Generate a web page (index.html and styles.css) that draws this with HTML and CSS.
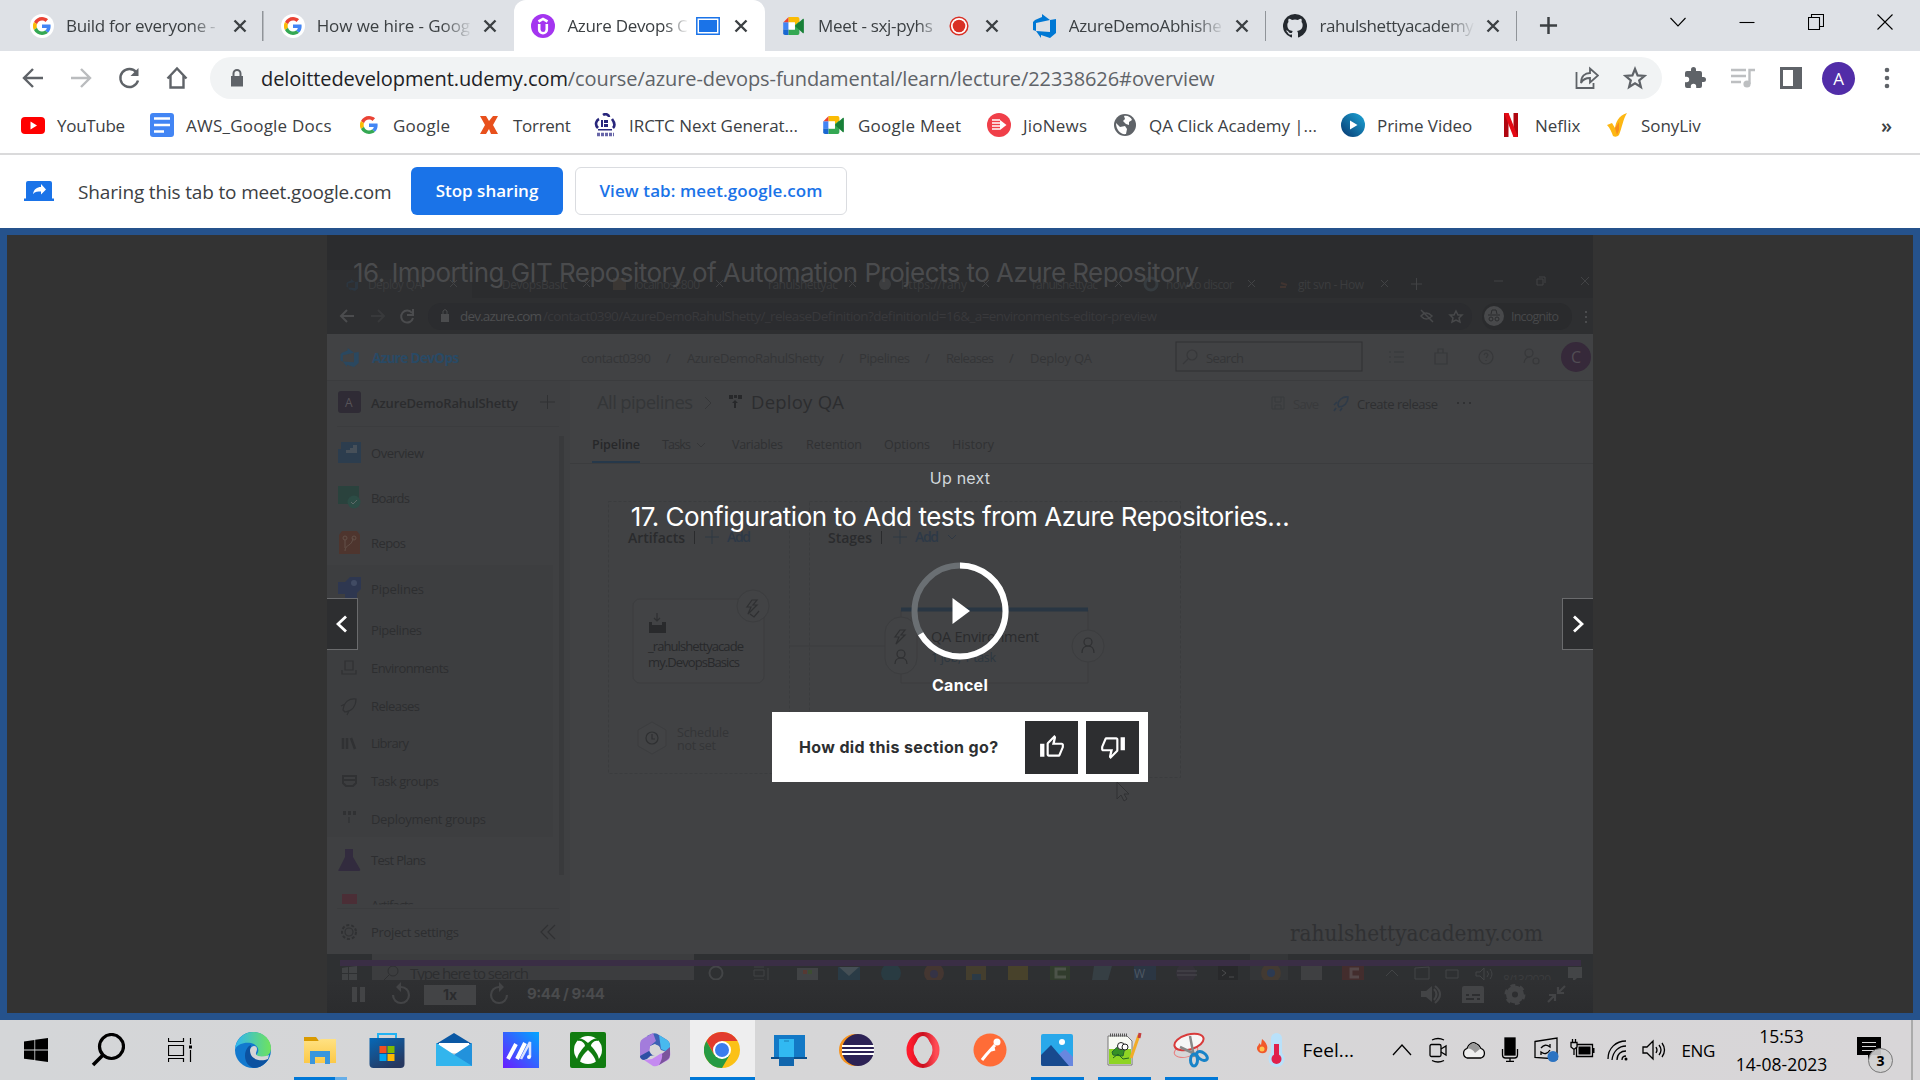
FILE: index.html
```html
<!DOCTYPE html>
<html lang="en">
<head>
<meta charset="utf-8">
<title>Azure Devops Course</title>
<link rel="stylesheet" href="styles.css">
</head>
<body>
<svg class="defs" width="0" height="0" aria-hidden="true">
  <defs>
    <symbol id="google" viewBox="0 0 48 48">
      <path fill="#ea4335" d="M24 9.500c3.500 0 6.700 1.200 9.200 3.600l6.900-6.900C35.900 2.400 30.500 0 24 0 14.600 0 6.500 5.400 2.600 13.200l8 6.200C12.400 13.700 17.700 9.500 24 9.500z"/>
      <path fill="#4285f4" d="M47 24.500c0-1.600-.2-3.100-.4-4.500H24v9h12.900c-.6 3-2.200 5.500-4.800 7.200l7.700 6C44.400 38 47 31.800 47 24.500z"/>
      <path fill="#fbbc05" d="M10.500 28.600a14.500 14.500 0 0 1 0-9.200l-8-6.200a24 24 0 0 0 0 21.600z"/>
      <path fill="#34a853" d="M24 48c6.500 0 11.900-2.100 15.900-5.800l-7.800-6c-2.100 1.500-4.900 2.300-8.100 2.300-6.300 0-11.600-4.200-13.500-9.900l-8 6.200C6.500 42.600 14.600 48 24 48z"/>
    </symbol>
    <symbol id="meet" viewBox="0 0 24 20">
      <path fill="#ea4335" d="M0 6 6 0v6z"/><path fill="#4285f4" d="M0 6h6v8H0z"/><path fill="#1967d2" d="M0 14h6v6H2q-2 0-2-2z"/>
      <path fill="#fbbc04" d="M6 0h10q2 0 2 2v5l-5 4V6H6z"/><path fill="#34a853" d="M6 14h7V9l5-4v13q0 2-2 2H6z"/><path fill="#188038" d="m13 10 9-8q1-.6 1 1v14q0 1.600-1 1z"/><path fill="#fff" d="M6 6h7v8H6z"/>
    </symbol>
    <symbol id="devops" viewBox="0 0 24 24"><path d="M23 5v14l-6 5-9-3v3l-5-7 14 1V6zM17 6 9 0v3L2 6 0 8v8l3 1V9z"/></symbol>
    <symbol id="close" viewBox="0 0 14 14"><path d="m1.500 1.500 11 11m0-11-11 11" stroke="#3c4043" stroke-width="2.400"/></symbol>
    <linearGradient id="edgeg" x1="0" x2="1"><stop stop-color="#2fb5f2"/><stop offset="1" stop-color="#6fe35c"/></linearGradient>
    <linearGradient id="aig" x1="0" y1="1" x2="1" y2="0"><stop stop-color="#6a1cff"/><stop offset="1" stop-color="#00a6ff"/></linearGradient>
    <linearGradient id="storeg" x1="0" y1="0" x2=".6" y2="1"><stop stop-color="#0669b8"/><stop offset="1" stop-color="#263860"/></linearGradient>
    <linearGradient id="operag"><stop stop-color="#ff1b2d"/><stop offset=".5" stop-color="#c9101f"/><stop offset="1" stop-color="#ff4b55"/></linearGradient>
    <linearGradient id="folderg" x1="0" y1="0" x2="0" y2="1"><stop stop-color="#ffe182"/><stop offset="1" stop-color="#fcc947"/></linearGradient>
    <linearGradient id="primeg" x1="0" y1="1" x2="1" y2="0"><stop stop-color="#07376f"/><stop offset="1" stop-color="#1da7d8"/></linearGradient>
    <linearGradient id="veil" x1="0" y1="0" x2="0" y2="1"><stop stop-color="#2f3032"/><stop offset="1" stop-color="#2b2c2e"/></linearGradient>
  </defs>
</svg>

<header class="tabstrip">
  <div class="tab"><svg class="fav" viewBox="0 0 24 24"><circle cx="12" cy="12" r="12" fill="#fff"/><use href="#google" x="3" y="3" width="18" height="18"/></svg><span class="tab-title">Build for everyone -</span><svg class="x"><use href="#close"/></svg></div>
  <div class="tab last"><svg class="fav" viewBox="0 0 24 24"><circle cx="12" cy="12" r="12" fill="#fff"/><use href="#google" x="3" y="3" width="18" height="18"/></svg><span class="tab-title wide">How we hire - Goog</span><svg class="x"><use href="#close"/></svg></div>
  <div class="tab active"><svg class="fav" viewBox="0 0 24 24"><circle cx="12" cy="12" r="12" fill="#a435f0"/><path d="m7.500 7.500 4.500-2.600 4.500 2.600M8.200 10v5.500a3.800 3.800 0 0 0 7.600 0V10" fill="none" stroke="#fff" stroke-width="2.600"/></svg><span class="tab-title short">Azure Devops C</span><svg class="state" viewBox="0 0 24 18"><path fill="#fff" stroke="#1a73e8" stroke-width="1.500" d="M.8.800h22.400v16.400H.8z"/><path fill="#1a73e8" d="M3 3h18v12H3z"/></svg><svg class="x"><use href="#close"/></svg></div>
  <div class="tab last"><svg class="fav" viewBox="0 0 24 24"><use href="#meet" y="3" x="0" width="24" height="18"/></svg><span class="tab-title mid">Meet - sxj-pyhs</span><svg class="rec" viewBox="0 0 20 20"><circle cx="10" cy="10" r="8.800" fill="#fff" stroke="#d93025" stroke-width="1.500"/><circle cx="10" cy="10" r="6.300" fill="#d93025"/></svg><svg class="x"><use href="#close"/></svg></div>
  <div class="tab"><svg class="fav" fill="#0078d4"><use href="#devops"/></svg><span class="tab-title">AzureDemoAbhishe</span><svg class="x"><use href="#close"/></svg></div>
  <div class="tab"><svg class="fav" viewBox="0 0 16 16"><path fill="#24292f" d="M8 0a8 8 0 0 0-2.500 15.600c.4.100.5-.2.500-.4v-1.500c-2.200.5-2.700-1-2.700-1-.4-.9-.9-1.100-.9-1.200-.7-.5.100-.5.100-.5.800.1 1.200.8 1.200.8.700 1.200 1.900.9 2.300.7.100-.5.300-.9.500-1.100C4.700 11.200 2.900 10.500 2.900 7.400c0-.9.300-1.600.8-2.100-.1-.2-.4-1 .1-2.100 0 0 .7-.2 2.200.8a7.600 7.600 0 0 1 4 0c1.500-1 2.200-.8 2.200-.8.500 1.100.2 1.900.1 2.100.5.500.8 1.200.8 2.100 0 3.100-1.900 3.700-3.700 3.900.300.300.600.800.600 1.500v2.400c0 .2.100.5.500.4A8 8 0 0 0 8 0z"/></svg><span class="tab-title snug">rahulshettyacademy</span><svg class="x"><use href="#close"/></svg></div>
  <svg class="newtab" viewBox="0 0 20 20"><path d="M10 1v18M1 10h18" stroke="#3c4043" stroke-width="2.600"/></svg>
  <div class="winbtns">
    <svg viewBox="0 0 16 16"><path d="m.5 4 7.500 8 7.500-8"/></svg>
    <svg viewBox="0 0 16 16"><path d="M.5 8.500h15"/></svg>
    <svg viewBox="0 0 16 16"><path d="M.5 3.500h11v12H.500zM3.500 3V.500h12v12H12"/></svg>
    <svg viewBox="0 0 16 16"><path d="m.5.500 15 15m0-15-15 15"/></svg>
  </div>
</header>

<nav class="toolbar">
  <svg class="tb" viewBox="0 0 24 24"><path d="M22 12H3m9-9-9 9 9 9"/></svg>
  <svg class="tb off" viewBox="0 0 24 24"><path d="M2 12h19m-9-9 9 9-9 9"/></svg>
  <svg class="tb" viewBox="0 0 24 24"><path d="M19.500 6.500A9 9 0 1 0 21 14.500"/><path d="M21.500 2v8h-8z" fill="#5f6368" stroke="none"/></svg>
  <svg class="tb" viewBox="0 0 24 24"><path d="m2.500 12.500 9.500-10 9.500 10M5.500 10v11.500h13V10"/></svg>
  <div class="omnibox">
    <svg class="lock" viewBox="0 0 14 18"><path d="M1 7h12v10.500H1z" fill="#5f6368"/><path d="M3.500 8V4.500a3.500 3.500 0 0 1 7 0V8" fill="none" stroke="#5f6368" stroke-width="2"/></svg>
    <span class="url"><b>deloittedevelopment.udemy.com</b>/course/azure-devops-fundamental/learn/lecture/22338626#overview</span>
    <svg class="tb thin" viewBox="0 0 24 24"><path d="M1.500 6v16h17v-5M6 17c0-7 4-10 9-10V2.500l8 7-8 7V12c-4 0-7 1-9 5z"/></svg>
    <svg class="tb thin star" viewBox="0 0 24 24"><path d="m12 3 2.600 6.400 6.900.5-5.300 4.400 1.700 6.700-5.900-3.700L6.100 21l1.700-6.700L2.500 9.900l6.900-.5z"/></svg>
  </div>
  <svg class="ext" viewBox="0 0 24 24"><path fill="#5f6368" d="M20.500 11H19V7a2 2 0 0 0-2-2h-4V3.500a2.500 2.500 0 0 0-5 0V5H4a2 2 0 0 0-2 2v3.800h1.500a2.700 2.700 0 0 1 0 5.400H2V20a2 2 0 0 0 2 2h3.800v-1.500a2.700 2.700 0 0 1 5.400 0V22H17a2 2 0 0 0 2-2v-4h1.500a2.500 2.500 0 0 0 0-5z"/></svg>
  <svg class="ext" viewBox="0 0 24 24"><path d="M0 4h15M0 10h15M0 16h10M18.500 18V4H24" fill="none" stroke="#bdbfc1" stroke-width="2.400"/><circle cx="16" cy="18" r="3.600" fill="#bdbfc1"/></svg>
  <svg class="ext" viewBox="0 0 24 24"><path fill="#5f6368" d="M1 1h22v22H1z"/><path fill="#fff" d="M4 4h10v16H4z"/></svg>
  <span class="avatar">A</span>
  <svg class="ext end" viewBox="0 0 24 24"><g fill="#5f6368"><circle cx="12" cy="4" r="2.300"/><circle cx="12" cy="12" r="2.300"/><circle cx="12" cy="20" r="2.300"/></g></svg>
</nav>

<nav class="bookmarks">
  <a><svg viewBox="0 0 24 24"><rect y="4" width="24" height="17" rx="4" fill="red"/><path fill="#fff" d="m9.500 8.500 6.500 4-6.500 4z"/></svg><span class="snug">YouTube</span></a>
  <a><svg viewBox="0 0 24 24"><rect width="24" height="24" rx="3" fill="#4285f4"/><path stroke="#fff" stroke-width="2.500" d="M4 5.500h16M4 12h16M4 18.500h10"/></svg><span class="wide">AWS_Google Docs</span></a>
  <a><svg viewBox="0 0 24 24"><use href="#google" x="3" y="3" width="18" height="18"/></svg><span class="wide">Google</span></a>
  <a><svg viewBox="0 0 24 24"><path fill="#e8501c" d="M3 3h6l3 5 4-5h5l-5 9 5 9h-7l-2-5-3 5H3l5-9z"/></svg><span class="snug">Torrent</span></a>
  <a><svg viewBox="0 0 24 24"><path d="M5 15C1 11 4 7 6 6m4-4c3-2 6 0 6 2m3 2c3 4 3 7 1 9" fill="none" stroke="#28267c" stroke-width="2.600"/><path d="M8 7h2v7H8zM11 7h4v3h-4zM11 11h4v3h-4zM5 16h14v1.500H5z" fill="#28267c"/><path d="M4 21.500h17" stroke="#6765a8" stroke-width="3.500" stroke-dasharray="3 1"/></svg><span>IRCTC Next Generat...</span></a>
  <a><svg viewBox="0 0 24 24"><use href="#meet" x="0" y="3" width="24" height="18"/></svg><span class="wide">Google Meet</span></a>
  <a><svg viewBox="0 0 24 24"><circle cx="12" cy="12" r="12" fill="#f03f49"/><path d="M5 7h8M5 10h8M5 13h8M5 16h8" stroke="#fff" stroke-width="1.500"/><path d="m13 7 6.500 5-6.500 5z" fill="#fff"/></svg><span class="wide">JioNews</span></a>
  <a><svg viewBox="0 0 24 24"><circle cx="12" cy="12" r="11" fill="#5f6368"/><path fill="#fff" d="M11 3c3-1 7 1 8 4l-3 2v3l-3-1-3-3 2-2zM3 10l4 4 5-1 2 3-1 5c-5 1-10-4-10-11z"/></svg><span>QA Click Academy |...</span></a>
  <a><svg viewBox="0 0 24 24"><circle cx="12" cy="12" r="12" fill="url(#primeg)"/><path d="m9 7.500 7.500 4.500L9 16.500z" fill="#fff"/></svg><span>Prime Video</span></a>
  <a><svg viewBox="0 0 24 24"><path fill="#b00610" d="M5 0h4.500v24H5zM14.500 0H19v24h-4.500z"/><path fill="#e50914" d="M5 0h4.500L19 24h-4.500z"/></svg><span>Neflix</span></a>
  <a><svg viewBox="0 0 24 24"><path fill="#fdb713" d="m2 12 5-2 3 5c1-6 3-12 12-15-4 6-5 15-8 22-2 2-4 2-6 1C7 20 5 15 2 12z"/><path fill="#f78c1e" d="m10 15 4-6v8l-2 5z"/></svg><span>SonyLiv</span></a>
  <span class="more">»</span>
</nav>

<section class="infobar">
  <svg class="cast" viewBox="0 0 30 20"><path fill="#1a73e8" d="M4 0h22q2 0 2 2v15.500h2V20H0v-2.500h2V2q0-2 2-2z"/><path fill="#fff" d="M9 13c1-5 4-7 8-7V3l5 5.500-5 5v-3c-3 0-6 0-8 2.500z"/></svg>
  <span class="share-text">Sharing this tab to meet.google.com</span>
  <button class="stop">Stop sharing</button>
  <button class="view">View tab: meet.google.com</button>
</section>

<main class="stage">
  <div class="player">
    <svg class="frame" viewBox="327 235 1266 778" font-family="'Open Sans','Noto Sans',sans-serif">
      <rect x="327" y="235" width="1266" height="99" fill="#2b2c2e"/>
      <path d="M327 298h1266v36H327zM327 270h145v28H327z" fill="#2e2f31"/>
      <rect x="428" y="303" width="1044" height="27" rx="13" fill="#2b2c2f"/>
      <rect x="1482" y="303" width="90" height="27" rx="13" fill="#2a2b2d"/>
      <g fill="#3b3c3e" font-size="12">
        <text x="368" y="289" textLength="54">Deploy QA</text><text x="502" y="289" textLength="66">DevopsBasic</text><text x="634" y="289" textLength="66">localhost:800</text><text x="768" y="289" textLength="70">rahulshettyac</text><text x="901" y="289" textLength="66">https://rahy</text><text x="1032" y="289" textLength="66">rahulshettyac</text><text x="1166" y="289" textLength="68">how to discor</text><text x="1298" y="289" textLength="66">git svn - How</text>
      </g>
      <path d="m450 280 7 7m0-7-7 7m133-7 7 7m0-7-7 7m133-7 7 7m0-7-7 7m133-7 7 7m0-7-7 7m133-7 7 7m0-7-7 7m133-7 7 7m0-7-7 7m133-7 7 7m0-7-7 7m133-7 7 7m0-7-7 7M1411 284h11m-5.500-6v12M1494 281h9m34-2h6v6h-6zm2-2h6v6m36-6 8 8m0-8-8 8" fill="none" stroke="#424345"/>
      <use href="#devops" x="346" y="279" width="13" height="12" fill="#2c3640"/>
      <rect x="613" y="278" width="13" height="12" fill="#3b3734"/><circle cx="885" cy="284" r="6" fill="#3c3d3f"/><circle cx="1151" cy="284" r="6" fill="none" stroke="#363c40" stroke-width="3"/><path d="M1280 287h6m-5-4 6 2" stroke="#403430" stroke-width="2"/>
      <path d="M354 316h-13m6-6-6 6 6 6M412 313a6 6 0 1 0 1 5M413 309v6h-6" fill="none" stroke="#4b4c4e" stroke-width="2"/><path d="M371 316h13m-6-6 6 6-6 6" fill="none" stroke="#38393b" stroke-width="2"/>
      <path d="M441 314h8v8h-8z" fill="#4b4c4e"/><path d="M443 314v-3q2-3 4 0v3" fill="none" stroke="#4b4c4e"/>
      <text x="460" y="321" font-size="13.500" fill="#4d4e50" textLength="82">dev.azure.com</text>
      <text x="543" y="321" font-size="13.500" fill="#39393c" textLength="614">/contact0390/AzureDemoRahulShetty/_releaseDefinition?definitionId=16&amp;_a=environments-editor-preview</text>
      <path d="M1421 316q5-6 11 0-6 6-11 0zm0-6 12 12m23-11 2 4h4l-3 3 1 4-4-2-4 2 1-4-3-3h4z" fill="none" stroke="#47484a" stroke-width="1.500"/>
      <circle cx="1494" cy="316" r="10" fill="#48494b"/><path d="M1488 315h12m-9-1 1-4h4l1 4" stroke="#2b2c2e" fill="none"/><circle cx="1491" cy="319" r="2" fill="none" stroke="#2b2c2e"/><circle cx="1497" cy="319" r="2" fill="none" stroke="#2b2c2e"/>
      <text x="1511" y="321" font-size="12.500" fill="#47484a" textLength="48">Incognito</text><path d="M1586 311v2m0 3v2m0 3v2" stroke="#4b4c4e" stroke-width="2"/>
      <text x="353" y="282" font-family="'Inter','Liberation Sans',sans-serif" font-size="26" fill="#4a4b4d" textLength="846">16. Importing GIT Repository of Automation Projects to Azure Repository</text>

      <rect x="327" y="334" width="1266" height="620" fill="#414244"/>
      <path d="M327 380h243v574H327z" fill="#3f4042"/><path d="M327 565h226v272H327z" fill="#3d3e40"/><path d="M559 436h5v439h-5z" fill="#393a3c"/>
      <path d="M327 380.500h1266M337 426.500h222M337 908.500h222M570 463.500h1023" stroke="#3b3c3e"/>
      <use href="#devops" x="340" y="348" width="20" height="19" fill="#2a4860"/>
      <text x="372" y="363" font-size="13.500" font-weight="700" fill="#294a66" textLength="87">Azure DevOps</text>
      <g font-size="13" fill="#343537"><text x="581" y="363" textLength="70">contact0390</text><text x="666" y="363">/</text><text x="687" y="363" textLength="137">AzureDemoRahulShetty</text><text x="839" y="363">/</text><text x="859" y="363" textLength="51">Pipelines</text><text x="925" y="363">/</text><text x="946" y="363" textLength="48">Releases</text><text x="1009" y="363">/</text><text x="1030" y="363" textLength="62">Deploy QA</text><text x="1206" y="363" textLength="38">Search</text></g>
      <rect x="1176" y="342" width="186" height="29" fill="none" stroke="#303133"/>
      <g fill="none" stroke="#37383a" stroke-width="1.200"><circle cx="1192" cy="355" r="5"/><path d="m1188 359-5 5M1389 352h2m3 0h10m-15 5h2m3 0h10m-15 5h2m3 0h10M1435 353h12v11h-12zM1438 353v-4h5v4"/><circle cx="1486" cy="357" r="7"/><path d="M1484 355q2-4 4 0l-2 3m0 2v1"/><circle cx="1529" cy="353" r="4"/><path d="M1524 363q1-6 6-6"/><circle cx="1536" cy="361" r="3"/></g>
      <circle cx="1576" cy="357" r="15" fill="#36293a"/><text x="1571" y="363" font-size="16" fill="#514d54">C</text>
      <rect x="338" y="391" width="23" height="22" rx="3" fill="#2f2b35"/><text x="345" y="407" font-size="12" fill="#575459">A</text>
      <g fill="#2b2c2e"><text x="371" y="408" font-size="13" font-weight="600" textLength="147">AzureDemoRahulShetty</text></g>
      <path d="M540 402h15m-7.500-7v14" stroke="#303133"/>
      <g fill="#2d2e30" font-size="13">
        <text x="371" y="458" textLength="53">Overview</text><text x="371" y="503" textLength="39">Boards</text><text x="371" y="548" textLength="35">Repos</text><text x="371" y="594" textLength="53">Pipelines</text><text x="371" y="635" textLength="51">Pipelines</text><text x="371" y="673" textLength="78">Environments</text><text x="371" y="711" textLength="49">Releases</text><text x="371" y="748" textLength="38">Library</text><text x="371" y="786" textLength="68">Task groups</text><text x="371" y="824" textLength="115">Deployment groups</text><text x="371" y="865" textLength="55">Test Plans</text><text x="371" y="937" textLength="88">Project settings</text>
        <svg x="371" y="900" width="50" height="4.500" viewBox="0 0 50 4.500"><text x="0" y="10" textLength="43">Artifacts</text></svg>
      </g>
      <path d="M338 449h3v-7h20v21h-23z" fill="#2c3d4e"/><path d="M346 453v-3h4v-2h3v-3h4v8z" fill="#475059"/>
      <path d="M338 486h21v18h-21z" fill="#2a423d"/><circle cx="354" cy="502" r="6.500" fill="#2c4c45"/><path d="m351 502 2 2 4-4" fill="none" stroke="#5d6967"/>
      <path d="m342 531h15l3 4v19h-21v-19z" fill="#4e352e"/><path d="M345 551c0-7 7-4 8-13m-8 2v8" fill="none" stroke="#625048"/><circle cx="345" cy="538" r="2" fill="none" stroke="#625048"/><circle cx="354" cy="538" r="2" fill="none" stroke="#625048"/>
      <path d="M338 582h7l5-5h11v12l-4 4v8h-12v-7h-7z" fill="#2e3750"/><circle cx="354" cy="583" r="3" fill="#414b63"/>
      <g fill="none" stroke="#303133" stroke-width="1.200"><path d="M345 661h8v9h-8zM342 670v4h14v-4M343 710c1-8 6-12 13-11 0 7-4 12-11 13zM345 704l-4 2m8 5-2 4"/><path d="M343 738v11m4-11v11m4-11 4 11" stroke-width="2.500"/><path d="m343 776h13v7l-3 3h-7l-3-3zm0 4h13" stroke-width="2"/><path d="M343 813h13" stroke-width="4" stroke-dasharray="3 2"/><path d="M349 817v6"/><circle cx="349" cy="932" r="7" stroke-dasharray="3 2" stroke-width="2"/><circle cx="349" cy="932" r="4"/><path d="m548 925-7 7 7 7m7-14-7 7 7 7"/></g>
      <path d="M345 849h8v8l7 12q1 2-2 2h-18q-3 0-1-2l6-12z" fill="#322b3e"/><path d="M342 894h15v10h-15z" fill="#4b2e36"/>
      <g font-size="18.500"><text x="597" y="409" fill="#343638" textLength="96">All pipelines</text><text x="751" y="409" fill="#2c2d2f" textLength="93">Deploy QA</text></g>
      <path d="m705 397 6 6-6 6" fill="none" stroke="#353638"/><path d="M729 395h4v4h-4zm5 0h3v3h-3zm4 0h4v4h-4zm-3 5 3 3h-2v5h-2v-5h-2z" fill="#27282a"/>
      <path d="M1272 397h12v12h-12zm3 0v5h6v-5m-6 12v-4h6v4" fill="none" stroke="#393a3c"/><text x="1293" y="409" font-size="13" fill="#393a3c" textLength="26">Save</text>
      <path d="M1338 405c0-5 5-9 10-8 0 6-4 10-9 10zm-1-3-3 3m8 3-2 3m-4-3-2 3" fill="none" stroke="#2e3a48" stroke-width="1.600"/><text x="1357" y="409" font-size="13" fill="#2e2f31" textLength="81">Create release</text><path d="M1457 403h2m4 0h2m4 0h2" stroke="#303133" stroke-width="2"/>
      <g font-size="12.500" fill="#303133"><text x="592" y="449" fill="#27282a" font-weight="600" textLength="48">Pipeline</text><text x="662" y="449" textLength="29">Tasks</text><text x="732" y="449" textLength="51">Variables</text><text x="806" y="449" textLength="56">Retention</text><text x="884" y="449" textLength="46">Options</text><text x="952" y="449" textLength="42">History</text></g>
      <path d="m697 443 4 4 4-4" fill="none" stroke="#353638"/><path d="M592 462h48" stroke="#26384a" stroke-width="2"/>
      <g fill="none" stroke="#3b3c3e" stroke-dasharray="3 2"><path d="M608.500 501.500h181v272h-181zM809.500 501.500h371v276h-371z"/></g>
      <g font-size="14" font-weight="600"><text x="628" y="543" fill="#2a2b2d" textLength="57">Artifacts</text><text x="828" y="543" fill="#2a2b2d" textLength="44">Stages</text><text x="727" y="542" fill="#2d3947" textLength="24">Add</text><text x="915" y="542" fill="#2d3947" textLength="24">Add</text></g>
      <path d="M694.500 531v13m187-13v13" stroke="#2a2b2d"/><path d="M705 537h14m-7-7v14M893 537h14m-7-7v14m48-9 4 4 4-4" fill="none" stroke="#2f3843"/>
      <g fill="#424345" stroke="#3c3d3f"><rect x="633" y="599" width="131" height="84" rx="7"/><path d="M789 646h112M901 610h187v73H901z"/><circle cx="753" cy="606" r="16"/><rect x="885" y="617" width="32" height="57" rx="16"/><circle cx="1088" cy="646" r="16"/><path d="m652 722 14 8v16l-14 8-14-8v-16z"/></g>
      <path d="M901 609.500h187" stroke="#293643" stroke-width="4"/>
      <g fill="none" stroke="#2f3032" stroke-width="1.200"><path d="m752 600-5 7h4l-3 7 9-9h-4l4-5zM750 614l4 3 5-6"/><path d="m900 630-5 7h4l-3 7 9-9h-4l4-5z"/><circle cx="901" cy="654" r="4"/><path d="M895 664q0-6 6-6t6 6"/><circle cx="1088" cy="642" r="4"/><path d="M1082 653q0-7 6-7t6 7"/><circle cx="652" cy="738" r="6"/><path d="M652 734v5h3M657 613v8m-3-3 3 3 3-3"/></g>
      <path d="M649 622h3v3h10v-3h4v11h-17z" fill="#292a2c"/>
      <g font-size="13" fill="#28292b"><text x="648" y="651" textLength="96">_rahulshettyacade</text><text x="648" y="667" textLength="92">my.DevopsBasics</text></g>
      <g font-size="12.500" fill="#343537"><text x="677" y="737" textLength="52">Schedule</text><text x="677" y="750" textLength="39">not set</text></g>
      <text x="931" y="642" font-size="14.500" fill="#2a2b2d" textLength="108">QA Environment</text><text x="931" y="662" font-size="12.500" fill="#2d3740" textLength="65">1 job, 1 task</text>
      <path d="M1117 782v17l4-4 3 6 3-2-3-5h5z" fill="#434446" stroke="#303133"/>
      <text x="1290" y="941" font-family="'DejaVu Serif',serif" font-size="22" fill="#303133" textLength="253" lengthAdjust="spacingAndGlyphs">rahulshettyacademy.com</text>

      <path d="M327 954h1266v59H327z" fill="#2e3032"/><path d="M372 954h322v27H372z" fill="#3c3d3f"/><path d="M1250 954h38v27h-38z" fill="#343638"/>
      <path d="m342 968 6-1v6h-6zm7-1 8-1v7h-8zm-7 7h6v6h-6zm7 0h8v7h-8z" fill="#414345"/>
      <circle cx="393" cy="971" r="5" fill="none" stroke="#2e2f31"/><path d="m389 975-6 6" stroke="#2e2f31"/>
      <text x="410" y="979" font-size="15" fill="#2d2e30" textLength="119">Type here to search</text>
      <circle cx="716" cy="973" r="6.500" fill="none" stroke="#434547" stroke-width="2"/><path d="M754 967h10m-10 3h10v6h-10zm0 10h10m4-12v13" fill="none" stroke="#414345"/>
      <path d="M797 968h21v13h-21z" fill="#414345"/><path d="M803 970h4v4h-4z" fill="#573933"/><path d="M808 970h4v4h-4z" fill="#3c4d32"/><path d="M838 967h22v13h-22z" fill="#2a3b46"/><path d="m839 967 10 9 10-9z" fill="#454f55"/><circle cx="891" cy="973" r="10" fill="#293b42"/><circle cx="934" cy="973" r="10" fill="#443631"/><circle cx="934" cy="974" r="4" fill="#353346"/>
      <path d="M966 966h20v14h-20z" fill="#443e2e"/><path d="M972 974h9v6h-9z" fill="#2b3a46"/><path d="M1008 966h20v14h-20z" fill="#48422b"/><path d="M1050 966h20v14h-20z" fill="#313c2d"/><path d="M1066 969h-10v8h10" fill="none" stroke="#4c5349" stroke-width="3"/><path d="M1094 966h18l-4 14h-16z" fill="#363f44"/><path d="M1134 966h22v14h-22z" fill="#2b3643"/><text x="1134" y="978" font-size="12" fill="#4e5863">W</text><circle cx="1186" cy="973" r="10" fill="#343139"/><path d="M1177 971h20m-20 4h20" stroke="#4b4b50"/><path d="M1218 966h20v14h-20z" fill="#28292b"/><path d="m1222 970 4 3-4 3m7 1h5" fill="none" stroke="#4b4c4e"/><circle cx="1271" cy="973" r="10" fill="#433a32"/><circle cx="1271" cy="973" r="4" fill="#2c3a52"/><path d="M1301 966h21v14h-21z" fill="#3f4042"/><path d="M1342 966h22v14h-22z" fill="#432d2d"/><path d="M1359 969h-8v8h8" fill="none" stroke="#544748" stroke-width="3"/>
      <path d="m1386 976 6-6 6 6m17-8 14-1v12h-14zm31 2h12v8h-12zm30 2h4l4-4v12l-4-4h-4zm11-1q3 3 0 6m3-8q4 5 0 10" fill="none" stroke="#424446"/><path d="M1568 967h14v11h-5l-4 4v-4h-5z" fill="#434547"/><text x="1503" y="984" font-size="12" fill="#3b3c3e" textLength="48">8/13/2020</text>
      <path d="M340 960h1241v6H340z" fill="#3a2e45"/>
      <path d="M327 980h1266v33H327z" fill="url(#veil)"/>
      <g fill="#434446"><path d="M352 987h5v15h-5zm8 0h5v15h-5zM424 985h52v20h-52zM1421 991h5l6-5v16l-6-5h-5zM1464 986h18q2 0 2 2v15h-22v-15q0-2 2-2z"/></g>
      <g fill="none" stroke="#434446" stroke-width="2.200"><path d="M393 995a8 8 0 1 0 8-8M507 995a8 8 0 1 1-8-8M1434 989q5 5 0 11m1-14q10 8 0 17M1565 986l-7 7m0-6v6h6m-16 9 7-7m-6 0h6v6"/></g><path d="m401 982-5 5 5 5zm98 0 5 5-5 5z" fill="#434446"/><path d="M1466 995h3m3 0h8m-14 4h8m3 0h3" stroke="#2d2e30" stroke-width="2"/>
      <circle cx="1515" cy="994.500" r="6" fill="none" stroke="#434446" stroke-width="6"/><circle cx="1515" cy="994.500" r="9" fill="none" stroke="#434446" stroke-width="3" stroke-dasharray="4.700 4.720"/>
      <g font-family="'Inter',sans-serif" font-weight="700" font-size="14"><text x="443" y="1000" fill="#2b2c2e" textLength="14">1x</text><text x="527" y="999" fill="#4a4b4d" font-size="15" textLength="78">9:44 / 9:44</text></g>
    </svg>
    <button class="nav prev"><svg viewBox="0 0 12 18"><path d="m10 1.500-8 7.500 8 7.500"/></svg></button>
    <div class="upnext">
      <p class="label">Up next</p>
      <h1>17. Configuration to Add tests from Azure Repositories…</h1>
      <svg class="ring" viewBox="0 0 98 98"><circle cx="49" cy="49" r="45.500" fill="none" stroke="#6a6f73" stroke-width="6"/><path d="M49 3.500a45.500 45.500 0 1 1-39.400 68.250" fill="none" stroke="#fff" stroke-width="6"/><path d="M41.500 36 59 49 41.500 62z" fill="#fff"/></svg>
      <p class="cancel">Cancel</p>
      <div class="feedback"><span>How did this section go?</span>
        <button><svg viewBox="0 0 24 24"><path fill="#fff" d="M9 21h9c.8 0 1.500-.5 1.800-1.200l3-7c.1-.300.200-.500.200-.800v-2c0-1.100-.9-2-2-2h-6.300l1-4.600v-.3c0-.4-.2-.8-.4-1.100L14.200 1 7.600 7.600C7.200 7.900 7 8.400 7 9v10c0 1.100.9 2 2 2zM9 9l4.300-4.300L12 10h9v2l-3 7H9zM1 9h4v12H1z"/></svg></button>
        <button><svg viewBox="0 0 24 24"><path fill="#fff" d="M15 3H6c-.8 0-1.500.5-1.800 1.200l-3 7c-.1.300-.2.500-.2.800v2c0 1.100.9 2 2 2h6.300l-1 4.600v.3c0 .4.200.8.400 1.100L9.800 23l6.600-6.600c.4-.300.600-.8.600-1.400V5c0-1.100-.9-2-2-2zm0 12-4.300 4.300L12 14H3v-2l3-7h9zM19 3h4v12h-4z"/></svg></button>
      </div>
    </div>
    <button class="nav next"><svg viewBox="0 0 12 18"><path d="m2 1.500 8 7.500-8 7.500"/></svg></button>
  </div>
</main>

<footer class="taskbar">
  <div class="sys"><svg width="24" height="24" viewBox="0 0 24 24"><path d="m0 3.400 10.400-1.500v9.600H0zM11.200 1.800 24 0v11.500H11.200zM0 12.400h10.400v9.700L0 20.700zm11.200 0H24V24l-12.800-1.800z"/></svg></div>
  <div class="sys"><svg width="34" height="34" viewBox="0 0 34 34"><circle cx="20.500" cy="13.500" r="12" fill="none" stroke="#000" stroke-width="3.200"/><path d="M12 22 2 32" stroke="#000" stroke-width="3.600"/></svg></div>
  <div class="sys"><svg width="25" height="24" viewBox="0 0 25 24"><path d="M.5 0v3.500h15V0M.5 7.500h15v10H.500zM.5 24v-3.500h15V24M22.500 0v6m0 6v12" fill="none" stroke="#000" stroke-width="1.200"/><path d="M21 7.500h3v3h-3z"/></svg></div>
  <div class="apps">
    <div class="app"><svg viewBox="0 0 36 36"><circle cx="18" cy="18" r="18" fill="#1279ce"/><path fill="url(#edgeg)" d="M0 17C1 7 9 0 18 0c11 0 18 8 18 16 0 6-4 9-9 9-4 0-6-1-5-3 3-4 1-9-6-11C9 10 3 12 0 17z"/><path fill="#0c52a0" d="M10 24c0-6 3-10 6-11-2 9 3 15 10 15 4 0 6-1 8-2-3 6-9 10-15 10-5-1-9-6-9-12z"/><path fill="#d5d5d7" d="M15 18c1-5 7-5 7-1 0 3-3 5 1 7 4 1 9 0 11-1l-1 4c-7 3-18 1-18-9z"/></svg></div>
    <div class="app run more"><svg viewBox="0 0 36 36"><path fill="#d99a00" d="M2 5h12l3 4v5H2z"/><path fill="url(#folderg)" d="M2 9h14l3-2h15v24H2z"/><path fill="#3a96dd" d="M8 19h20v13h-5v-7H13v7H8z"/></svg></div>
    <div class="app"><svg viewBox="0 0 36 36"><path d="M9 8V2h18v6" fill="none" stroke="#22b3f3" stroke-width="2"/><path fill="url(#storeg)" d="M.5 6h35v26q0 4-4 4h-27q-4 0-4-4z"/><path fill="#f25022" d="M10.500 14h7v7h-7z"/><path fill="#7fba00" d="M18.500 14h7v7h-7z"/><path fill="#00a4ef" d="M10.500 22h7v7h-7z"/><path fill="#ffb900" d="M18.500 22h7v7h-7z"/></svg></div>
    <div class="app"><svg viewBox="0 0 36 36"><path fill="#0a58a4" d="M0 12 18 1l18 11z"/><path fill="#fff" d="M3 11h30v10H3z"/><path fill="#2ea7e8" d="m0 11 18 12L36 11v23H0z"/><path fill="#1a83d4" d="m36 34-18-11 18-12z" opacity=".6"/><path fill="#35bbf0" d="m0 11 36 23H0z" opacity=".7"/></svg></div>
    <div class="app"><svg viewBox="0 0 36 36"><path fill="url(#aig)" d="M0 0h36v36H0z"/><path d="m5 27 8-15m1 15 8-16" stroke="#fff" stroke-width="4"/><path d="m18 27 9-17v15" fill="none" stroke="#d9e2ff" stroke-width="2.500"/><circle cx="26" cy="25" r="2" fill="#fff"/></svg></div>
    <div class="app"><svg viewBox="0 0 36 36"><rect width="36" height="36" rx="2" fill="#107c10"/><circle cx="18" cy="18" r="14" fill="#fff"/><path fill="#107c10" d="M7 6c5 0 9 3 11 5 2-2 6-5 11-5l-1 3c-4-1-7 3-7 5 4 4 8 10 8 14l-3 3c0-5-5-10-8-13-3 3-8 8-8 13l-3-3c0-4 4-10 8-14 0-2-3-6-7-5z"/></svg></div>
    <div class="app"><svg viewBox="0 0 36 36"><path fill="#3c62b4" d="M10 4q8-5 12-1l8 5q3 2 3 6v7l-9-3-6-6-7 3z"/><path fill="#48b9ee" d="M22 3l8 5q3 2 3 6v7l-9-4z"/><path fill="#a37cdc" d="M16 1 7 6q-4 2-4 6v12q0 3 3 4l7-3V14l6-5z"/><path fill="#2e4fa4" d="M3 24q0 3 4 4 4-1 6-4l5-1-6-4z"/><path fill="#c48af0" d="m7 28 9 6q3 1 6-1l9-5q3-2 2-10l-10 4-8 5z"/><path fill="#7b549c" d="M33 15v8q0 3-3 5l-8 5q4-7 3-11z"/><circle cx="18" cy="18" r="5.500" fill="#d7d7d8"/></svg></div>
    <div class="app current run"><svg viewBox="0 0 36 36"><circle cx="18" cy="18" r="18" fill="#fbc116"/><path fill="#e23b2e" d="M2.400 9A18 18 0 0 1 33.600 9H18l-7.800 13.500z"/><path fill="#269a43" d="M2.400 9A18 18 0 0 0 18 36l8-13.500-8 4.500-8-4.500z"/><circle cx="18" cy="18" r="9" fill="#fff"/><circle cx="18" cy="18" r="7" fill="#3b7ded"/></svg></div>
    <div class="app"><svg viewBox="0 0 36 36"><path fill="#1379c6" d="M3 3h31v22H3z"/><path fill="#0a4f8c" d="M0 25h36v2H0z"/><path fill="#31b9f2" d="M8 7h15v18H8z"/><path fill="#1166ad" d="M8 25h15v9H8z"/><path stroke="#1a7eb5" d="M13 9h5"/></svg></div>
    <div class="app"><svg viewBox="0 0 36 36"><circle cx="17" cy="18" r="16" fill="#f7941e"/><circle cx="20" cy="18" r="16" fill="#2c2255"/><path d="M4 14h32M4 18h32M4 22h32" stroke="#fff" stroke-width="1.800"/></svg></div>
    <div class="app"><svg viewBox="0 0 36 36"><ellipse cx="18" cy="18" rx="13" ry="14.500" fill="none" stroke="url(#operag)" stroke-width="7"/><ellipse cx="18" cy="18" rx="8" ry="14" fill="#d6d6d7"/></svg></div>
    <div class="app"><svg viewBox="0 0 36 36"><circle cx="18" cy="18" r="16.500" fill="#ff6c37"/><circle cx="25" cy="10" r="3.500" fill="#fff"/><path d="m23 13-9 10-4 5m9-10 4-1" stroke="#fff" stroke-width="3"/></svg></div>
    <div class="app run"><svg viewBox="0 0 36 36"><rect x="2" y="2" width="32" height="32" rx="2" fill="#29a8ea"/><path fill="#6887df" d="m18 24 8-7 8 8v9H18z"/><path fill="#184a8e" d="m2 23 10-10 18 21H4q-2 0-2-2z"/><circle cx="23" cy="10" r="3" fill="#fff"/></svg></div>
    <div class="app run"><svg viewBox="0 0 36 36"><path fill="#f8faf4" stroke="#777" d="M2 4h19l5 5v24H2z"/><path fill="#8ed424" d="M3 17h22v15H3z"/><path d="M4 3h17" stroke="#555" stroke-width="3" stroke-dasharray="1 1"/><path fill="#359125" stroke="#263" d="M6 20q8-9 13-5l-2 9-10-1z"/><circle cx="15" cy="14" r="3.500" fill="#fff" stroke="#222"/><circle cx="19" cy="15" r="3" fill="#fff" stroke="#222"/><path d="m7 26 5-4 5 5 6-1" fill="none" stroke="#262"/><path d="M33 3 25 26" stroke="#f2ab27" stroke-width="3"/><path d="m34 1-1 5" stroke="#c43f3f" stroke-width="3"/></svg></div>
    <div class="app run"><svg viewBox="0 0 36 36"><ellipse cx="13" cy="19" rx="12" ry="6" fill="none" stroke="#e88282" transform="rotate(-12 13 19)"/><ellipse cx="16" cy="10" rx="15" ry="7.500" fill="#f6f6f6" stroke="#d83b3b" stroke-width="2" transform="rotate(-16 16 10)"/><path d="m17 4 4 21M7 15l17 8" stroke="#888" stroke-width="2.500"/><ellipse cx="21" cy="28" rx="3.500" ry="6" fill="none" stroke="#1883c8" stroke-width="3"/><ellipse cx="29" cy="24" rx="6" ry="3.500" fill="none" stroke="#1883c8" stroke-width="3" transform="rotate(35 29 24)"/></svg></div>
  </div>
  <div class="weather"><svg width="30" height="36" viewBox="0 0 30 36"><path fill="#f1582a" d="M5 7c5 4 6 8 5 11-1 5-9 4-10-1 0-4 2-3 2-6l2 2z"/><circle cx="5" cy="17" r="2.500" fill="#ffc34d"/><rect x="14" y="1" width="11" height="27" rx="5.500" fill="#b9e1fa"/><circle cx="19.500" cy="27" r="8" fill="#b9e1fa"/><path d="M19.500 12v14" stroke="#e0214c" stroke-width="5"/><circle cx="19.500" cy="27" r="5" fill="#e0214c"/></svg><span>Feel...</span></div>
  <div class="tray">
    <svg viewBox="0 0 24 24"><path d="m3 17 9-10 9 10"/></svg>
    <svg viewBox="0 0 24 24"><rect x="4" y="6.500" width="11" height="12" rx="1.500"/><path d="m15 11 5-3v9l-5-3M6 2q6-3 12 0M6 22.500q6 3 12 0"/></svg>
    <svg viewBox="0 0 24 24"><path fill="#eee" d="M5 20a5 5 0 0 1 0-9.500c2-5 6-7 9-5 3 1 4 3 5 5a5 5 0 0 1 0 9.500z"/><path fill="#999" stroke="none" d="M5.500 10.500c2-5 6-6 8-4.500 3 1 4 3 4.500 5l-5 4q-3-5-7.500-4.500z"/></svg>
    <svg viewBox="0 0 24 24"><rect x="7" y="0" width="10" height="17" fill="#000"/><path d="M4.500 11v6q0 3 3 3h9q3 0 3-3v-6M12 20v3m-4 .3h8"/></svg>
    <svg viewBox="0 0 24 24"><path d="M1 3.500 23 0v21L1 19.500zM7 10q4-5 9-1V6m0 6q-4 6-9 2v3"/><circle cx="19" cy="18.500" r="5.500" fill="#2b73c2" stroke="none"/></svg>
    <svg viewBox="0 0 24 24"><path d="M6.500 6.500h16v12h-16z"/><path fill="#000" stroke="none" d="M8.500 8.500h12v8h-12zM23 10h1.500v5H23z"/><path fill="#d6d6d7" d="M1 4.500h6V9l-3 2.500L1 9zM2.500 4V1m3 3V1M4 12v5"/></svg>
    <svg viewBox="0 0 24 24"><path d="M2 21C2 10 10 3 20 3M6 22C7 13 13 8 20 8M11 22c0-6 4-9 9-9M16 22q0-4 4-4"/><circle cx="20" cy="21" r="1.500" fill="#000" stroke="none"/></svg>
    <svg viewBox="0 0 24 24"><path d="M1 9h4l6-6v18l-6-6H1zM14 9q2 3 0 6m3-8q4 5 0 10m3-12q5 7 0 14"/></svg>
  </div>
  <span class="lang">ENG</span>
  <div class="clock"><span>15:53</span><span>14-08-2023</span></div>
  <svg class="notif" viewBox="0 0 36 36"><path d="M0 0h24v18h-9l-4 5v-5H0z"/><path stroke="#d6d6d6" d="M5 5.500h14M5 9.500h14M5 13.500h14"/><circle cx="23.500" cy="23.500" r="12" fill="#d2d2d2" fill-opacity=".9" stroke="#777"/><text x="23.500" y="28.500" text-anchor="middle" font-size="14" font-weight="700" font-family="'Open Sans',sans-serif">3</text></svg>
</footer>
</body>
</html>
```
FILE: styles.css
```css
* { box-sizing: border-box; }
body { margin: 0; width: 1920px; height: 1080px; overflow: hidden; background: #fff; color: #3c4043; font-family: "Open Sans", "Noto Sans", sans-serif; display: flex; flex-direction: column; }
svg { display: block; flex: none; }
.defs { position: absolute; }
button { font: inherit; border: 0; padding: 0; margin: 0; }
p, h1 { margin: 0; }

.tabstrip { height: 51px; flex: none; background: #dee1e6; display: flex; padding-left: 13px; }
.tab { width: 250.700px; height: 51px; padding: 0 17px 0 17px; display: flex; align-items: center; background: linear-gradient(#909499, #909499) right center / 1.500px 30px no-repeat; }
.tab.last { background: none; }
.tab.active { background: #fff; border-radius: 12px 12px 0 0; }
.fav { width: 24px; height: 24px; margin-right: 12px; }
.tab-title { width: 156px; flex: none; overflow: hidden; white-space: nowrap; font-size: 17px; letter-spacing: -.3px; -webkit-mask-image: linear-gradient(90deg, #000 80%, transparent); }
.tab-title.wide { letter-spacing: -.1px; }
.tab-title.snug { letter-spacing: -.42px; }
.tab-title.short { width: 122px; }
.tab-title.mid { width: 124px; }
.state { width: 24px; height: 18px; margin-left: 7px; }
.rec { width: 20px; height: 20px; margin-left: 7px; margin-right: 2px; }
.x { width: 14px; height: 14px; margin-left: auto; }
.newtab { width: 19px; height: 19px; margin: 16px 0 0 22px; }
.winbtns { margin-left: auto; display: flex; gap: 53px; padding: 14px 27px 0 0; }
.winbtns svg { width: 16px; height: 16px; fill: none; stroke: #000; stroke-width: 1.100; }

.toolbar { height: 54px; flex: none; display: flex; align-items: center; padding-left: 21px; }
.tb { width: 24px; height: 24px; margin-right: 24px; fill: none; stroke: #5f6368; stroke-width: 2.400; }
.tb.off { stroke: #babcbe; }
.tb.thin { stroke-width: 1.800; }
.tb.star { margin-right: 15px; stroke-width: 2.200; }
.omnibox { width: 1452px; height: 42px; flex: none; margin-left: -3px; margin-right: 21px; border-radius: 21px; background: #f1f3f4; display: flex; align-items: center; }
.lock { width: 14px; height: 18px; margin: 0 17px 0 20px; }
.url { flex: 1; white-space: nowrap; font-size: 20px; letter-spacing: -.08px; color: #5f6368; }
.url b { font-weight: 400; color: #202124; }
.ext { width: 24px; height: 24px; margin-right: 24px; }
.ext.end { margin-right: 0; }
.avatar { flex: none; width: 33px; height: 33px; margin: 0 20px 0 -5px; border-radius: 50%; background: #512da8; color: #fff; font-size: 17px; line-height: 33px; text-align: center; }

.bookmarks { height: 50px; flex: none; border-bottom: 2px solid #dadadb; padding: 0 0 8px 21px; display: grid; align-items: center; grid-template-columns: 129px 207px 120px 116px 229px 165px 126px 228px 158px 106px 276px 40px; }
.bookmarks a { display: flex; align-items: center; gap: 12px; white-space: nowrap; font-size: 17px; letter-spacing: -.05px; }
.bookmarks .wide { letter-spacing: .23px; }
.bookmarks .snug { letter-spacing: -.3px; }
.bookmarks svg { width: 24px; height: 24px; }
.more { font-size: 20px; font-weight: 600; }

.infobar { height: 73px; flex: none; padding: 0 0 2px 24px; display: flex; align-items: center; }
.cast { width: 30px; height: 20px; margin-right: 24px; }
.share-text { width: 333px; padding-top: 2px; white-space: nowrap; font-size: 19px; letter-spacing: -.16px; }
.infobar button { height: 48px; border-radius: 6px; font-size: 17px; font-weight: 600; letter-spacing: 0; }
.stop { width: 152px; background: #1a73e8; color: #fff; }
.infobar .view { width: 272px; margin-left: 12px; background: #fff; color: #1a73e8; border: 1px solid #dadce0; letter-spacing: .1px; }

.stage { height: 792px; flex: none; border: 7px solid #25528c; background: #333; display: flex; justify-content: center; }
.player { width: 1266px; height: 778px; position: relative; font-family: Inter, "Liberation Sans", sans-serif; color: #fff; }
.frame { width: 1266px; height: 778px; }
.nav { position: absolute; top: 363px; width: 31px; height: 52px; background: #2d2e30; border: 1px solid #6a6b6d; display: flex; align-items: center; justify-content: center; }
.nav svg { width: 12px; height: 18px; fill: none; stroke: #fff; stroke-width: 2.800; }
.prev { left: 0; border-left: 0; }
.next { right: 0; border-right: 0; }
.upnext { position: absolute; inset: 0; padding-top: 232px; display: flex; flex-direction: column; align-items: center; }
.label { font-size: 16px; line-height: 22px; letter-spacing: .2px; color: #d1d7dc; }
h1 { margin-top: 11px; font-size: 26px; line-height: 34px; font-weight: 400; letter-spacing: -.48px; white-space: nowrap; }
.ring { width: 98px; height: 98px; margin-top: 27.500px; }
.cancel { margin-top: 13.500px; font-size: 16px; line-height: 24px; font-weight: 700; letter-spacing: .3px; }
.feedback { margin-top: 15px; width: 376px; height: 70px; padding: 0 9px 0 27px; background: #fff; color: #2d2f31; display: flex; align-items: center; gap: 8px; font-size: 16px; font-weight: 700; letter-spacing: .37px; white-space: nowrap; }
.feedback span { width: 218px; }
.feedback button { width: 53px; height: 53px; background: #2d2e30; display: grid; place-items: center; }
.feedback button svg { width: 26px; height: 26px; }

.taskbar { height: 60px; flex: none; display: flex; align-items: center; background: linear-gradient(90deg, #d4d6d8, #d6d6d7 40%, #d8d6d8); color: #000; }
.sys { flex: none; width: 72px; height: 60px; display: grid; place-items: center; }
.apps { flex: none; display: flex; height: 60px; padding-left: 3.500px; }
.app { width: 67px; height: 60px; display: grid; place-items: center; }
.app svg { width: 36px; height: 36px; }
.app.run { background: linear-gradient(#0078d7, #0078d7) center bottom / 53px 3px no-repeat; }
.app.more { background: linear-gradient(90deg, #0078d7 77%, #66aee8 77%) center bottom / 53px 3px no-repeat; }
.app.current { width: 65px; margin: 0 1px; background: linear-gradient(#0078d7, #0078d7) center bottom / 65px 3px no-repeat, #eeeeef; }
.weather { flex: none; display: flex; align-items: center; margin-left: 32px; width: 130px; gap: 16px; font-size: 19px; letter-spacing: .1px; }
.tray { flex: none; display: flex; gap: 12px; padding-left: 3px; }
.tray svg { width: 24px; height: 24px; fill: none; stroke: #000; stroke-width: 1.300; overflow: visible; }
.lang { flex: none; margin-left: 16px; width: 45px; font-size: 17px; letter-spacing: -.4px; }
.clock { flex: none; width: 110px; display: flex; flex-direction: column; align-items: center; font-size: 17.500px; line-height: 28px; }
.notif { width: 36px; height: 36px; margin: 9px 0 0 20px; }
.taskbar::after { content: ""; width: 2px; height: 60px; margin-left: 18px; background: #aaa; }
```
